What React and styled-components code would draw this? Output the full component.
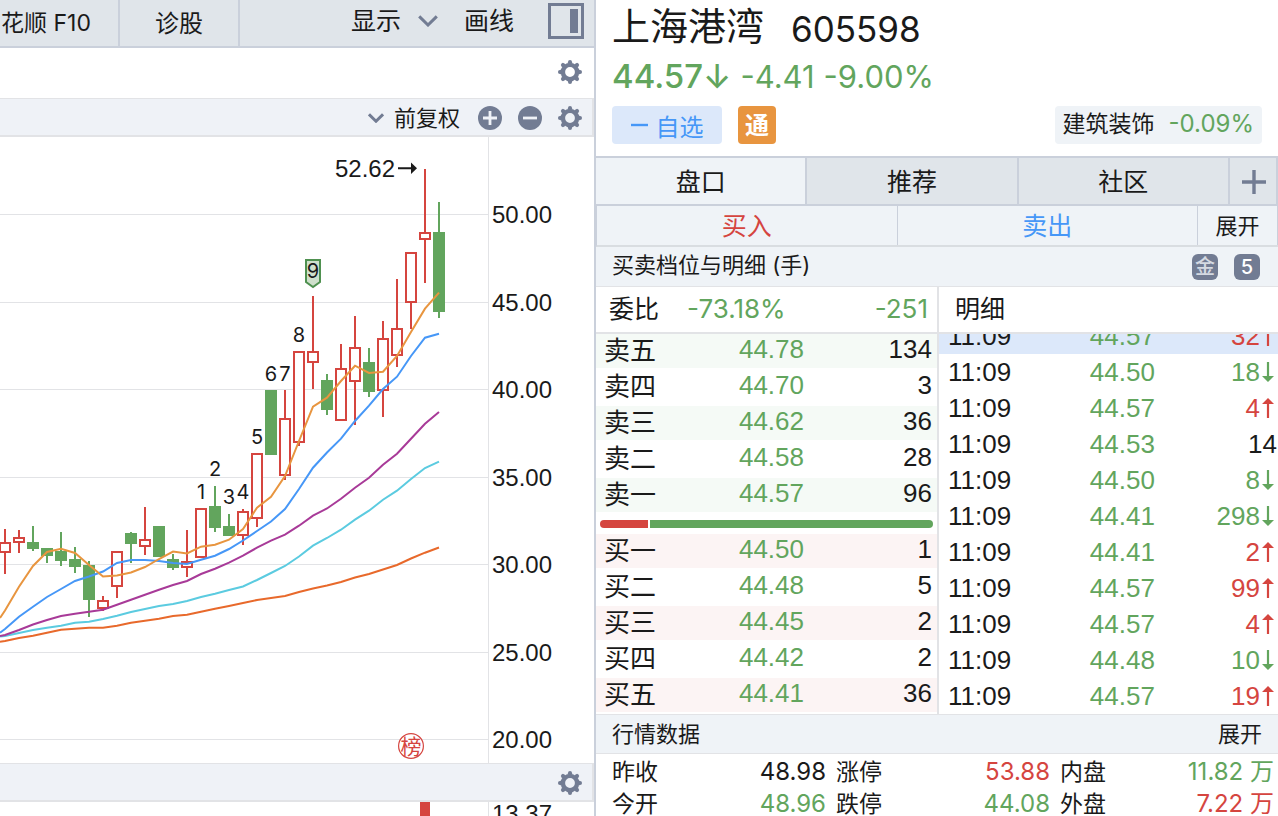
import React from "react";
import styled, { createGlobalStyle } from "styled-components";

const colours = {
  text: "#1a1a1a",
  up: "#d5453f",
  down: "#62a55d",
  blue: "#4697f7",
  orange: "#e8953f",
  slate: "#727c93",
  bar: "#e0e5ea",
  panel: "#eff3f7",
  strip: "#eff2f7",
  edge: "#cad0db",
  line: "#e2e3e6",
  white: "#ffffff"
};

const fonts = {
  ui: `Inter, "Noto Sans CJK SC", sans-serif`,
  data: `"Liberation Sans", "Noto Sans CJK SC", sans-serif`
};

const GlobalStyle = createGlobalStyle`
  * {
    box-sizing: border-box;
  }

  body {
    margin: 0;
    overflow: hidden;
    background-color: ${colours.white};
  }

  button {
    margin: 0;
    padding: 0;
    border: 0;
    background: none;
    color: inherit;
    font: inherit;
    cursor: pointer;
  }

  table {
    width: 100%;
    table-layout: fixed;
    border-spacing: 0;
  }

  th, td {
    padding: 0;
    font-weight: 400;
  }
`;

const Page = styled.div`
  /* Display & Box Model */
  display: grid;
  grid-template-columns: minmax(0, 596fr) minmax(0, 682fr);
  height: 100vh;
  overflow: hidden;

  /* Text */
  color: ${colours.text};
  font-family: ${fonts.ui};
  font-size: 24px;
`;

/* ---------- Chart side ---------- */

const ChartSide = styled.section`
  /* Display & Box Model */
  display: flex;
  flex-direction: column;
  min-width: 0;
  overflow: hidden;
  border-right: 2px solid ${colours.edge};
`;

const Toolbar = styled.nav`
  /* Display & Box Model */
  display: flex;
  flex: 0 0 48px;
  border-bottom: 2px solid ${colours.edge};

  /* Color */
  background-color: ${colours.bar};
`;

const ToolTab = styled.button`
  /* Display & Box Model */
  width: 120px;
  padding-left: ${props => (props.$cut ? "1px" : "0")};
  padding-bottom: 4px;
  border-right: 2px solid ${colours.edge};

  /* Text */
  font-size: ${props => (props.$cut ? "23px" : "24px")};
  text-align: ${props => (props.$cut ? "left" : "center")};
  white-space: nowrap;
`;

const ToolActions = styled.div`
  /* Display & Box Model */
  display: flex;
  flex: 1;
  align-items: center;
  justify-content: flex-end;
  gap: 26px;
  padding: 0 10px 4px 0;
`;

const ToolButton = styled.button`
  /* Display & Box Model */
  display: flex;
  align-items: center;
  gap: 17px;

  /* Text */
  font-size: 25px;
  line-height: 40px;
`;

const LayoutButton = styled.button`
  /* Display & Box Model */
  display: flex;
  margin-left: 8px;
`;

const InfoStrip = styled.div`
  /* Display & Box Model */
  display: flex;
  flex: 0 0 50px;
  align-items: center;
  justify-content: flex-end;
  padding: 0 12px 2px 0;
`;

const Strip = styled.div`
  /* Display & Box Model */
  display: flex;
  flex: 0 0 39px;
  align-items: center;
  justify-content: flex-end;
  gap: 16px;
  padding: 2px 10px 0 0;
  border: solid ${colours.line};
  border-width: 1px 2px 2px 0;

  /* Color */
  background-color: ${colours.strip};
`;

const AdjustButton = styled.button`
  /* Display & Box Model */
  display: flex;
  align-items: center;
  gap: 10px;
  margin-right: 2px;

  /* Text */
  font-size: 22px;
  line-height: 32px;
`;

const IconButton = styled.button`
  /* Display & Box Model */
  display: flex;
`;

const Drawing = styled.svg`
  /* Display & Box Model */
  display: block;
  flex: none;
  width: 100%;
  height: auto;

  /* Text */
  font-family: ${fonts.data};
  font-size: 24px;
`;

const Count = styled.text`
  /* Text */
  font-family: ${fonts.ui};
  font-size: 20px;
  text-anchor: middle;
`;

/* ---------- Quote side ---------- */

const QuoteSide = styled.section`
  /* Display & Box Model */
  display: flex;
  flex-direction: column;
  min-width: 0;
  overflow: hidden;
`;

const StockHeader = styled.header`
  /* Display & Box Model */
  padding: 0 16px 12px;
  border-bottom: 2px solid ${colours.edge};
`;

const StockTitle = styled.h1`
  /* Display & Box Model */
  display: flex;
  gap: 27px;
  height: 56px;
  margin: 0;

  /* Text */
  font-size: 38px;
  font-weight: 400;
  line-height: 53px;
`;

const StockCode = styled.span`
  /* Text */
  font-size: 35px;
  line-height: 59px;
`;

const PriceLine = styled.div`
  /* Display & Box Model */
  display: flex;
  align-items: baseline;
  gap: 9px;
  height: 40px;

  /* Color */
  color: ${colours.down};

  /* Text */
  font-size: 31px;
  line-height: 40px;
`;

const LastPrice = styled.span`
  /* Text */
  font-size: 33px;
  font-weight: 500;
`;

const TagRow = styled.div`
  /* Display & Box Model */
  display: flex;
  gap: 16px;
  margin-top: 10px;
`;

const Tag = styled.button`
  /* Display & Box Model */
  display: flex;
  align-items: center;
  justify-content: center;
  gap: 8px;
  min-width: ${props => props.$width};
  height: 38px;
  padding-bottom: ${props => (props.$bold ? "4px" : "0")};
  border-radius: 4px;

  /* Color */
  background-color: ${props => props.$fill};
  color: ${props => props.$ink};

  /* Text */
  font-weight: ${props => (props.$bold ? 700 : 400)};
`;

const Sector = styled.a`
  /* Display & Box Model */
  display: flex;
  gap: 14px;
  height: 38px;
  margin-left: auto;
  padding: 0 8px;
  border-radius: 4px;

  /* Color */
  background-color: ${colours.panel};
  color: ${colours.text};

  /* Text */
  font-size: 23px;
  line-height: 36px;
  text-decoration: none;
`;

const Tabs = styled.nav`
  /* Display & Box Model */
  display: grid;
  grid-template-columns: repeat(3, 1fr) 48px;
  flex: 0 0 48px;
  border-bottom: 2px solid ${colours.edge};
`;

const Tab = styled.button`
  /* Display & Box Model */
  display: flex;
  align-items: center;
  justify-content: center;
  padding: ${props => (props.$icon ? "2px 0 0 2px" : "0 0 2px")};
  border-right: 2px solid ${colours.edge};

  /* Color */
  background-color: ${props => (props.$active ? colours.panel : colours.bar)};

  /* Text */
  font-size: 25px;
`;

const TradeBar = styled.div`
  /* Display & Box Model */
  display: grid;
  grid-template-columns: 1fr 1fr 80px;
  flex: 0 0 41px;
  border-bottom: 2px solid #d9dde1;
  border-left: 1px solid ${colours.edge};

  /* Color */
  background-color: ${colours.panel};
`;

const TradeButton = styled.button`
  /* Display & Box Model */
  padding-top: 2px;
  border-right: 1px solid ${colours.edge};

  /* Color */
  color: ${props => props.$ink};

  /* Text */
  font-size: ${props => (props.$small ? "22px" : "25px")};
  line-height: 37px;
`;

const SectionBar = styled.div`
  /* Display & Box Model */
  display: flex;
  align-items: center;
  gap: 16px;
  flex: 0 0 40px;
  padding: 0 ${props => (props.$ruled ? "16px" : "18px")} 0 16px;
  border: solid ${colours.line};
  border-width: ${props => (props.$ruled ? "1px 0" : "0 0 1px")};

  /* Color */
  background-color: ${colours.panel};

  /* Text */
  font-size: 22px;
`;

const SectionTitle = styled.h2`
  /* Display & Box Model */
  flex: 1;
  margin: 0;
  padding-bottom: ${props => (props.$raised ? "4px" : "0")};

  /* Text */
  font-size: 22px;
  font-weight: 400;
  line-height: 34px;
`;

const ExpandButton = styled.button`
  /* Text */
  line-height: 34px;
`;

const Badge = styled.button`
  /* Display & Box Model */
  width: 26px;
  height: 26px;
  border-radius: 6px;

  /* Color */
  background-color: ${colours.slate};
  color: ${props => props.$ink};

  /* Text */
  font-size: 20px;
  font-weight: 500;
  line-height: 26px;
`;

const Depth = styled.div`
  /* Display & Box Model */
  display: grid;
  grid-template-columns: minmax(0, 341fr) minmax(0, 341fr);
  grid-template-rows: minmax(0, 1fr);
  flex: 0 0 427px;
  min-height: 0;

  /* Text */
  font-family: ${fonts.data};
  font-size: 26px;
`;

const DepthColumn = styled.div`
  /* Display & Box Model */
  display: flex;
  flex-direction: column;
  min-width: 0;
  min-height: 0;
  border-left: ${props => (props.$ruled ? `2px solid ${colours.line}` : "0")};
`;

const DepthHead = styled.div`
  /* Display & Box Model */
  display: flex;
  flex: 0 0 47px;
  gap: 28px;
  padding: 0 9px 0 ${props => (props.$wide ? "16px" : "13px")};
  border-bottom: 2px solid ${colours.line};

  /* Text */
  font-size: 25px;
  line-height: 45px;
`;

const Ratio = styled.span`
  /* Display & Box Model */
  margin-left: ${props => (props.$last ? "auto" : "0")};

  /* Color */
  color: ${colours.down};

  /* Text */
  font-family: ${fonts.ui};
  font-size: 26px;
  line-height: 43px;
`;

const LevelCell = styled.td`
  /* Display & Box Model */
  height: 36px;
  padding-right: ${props => (props.$last ? "5px" : "0")};
  border-bottom: 2px solid ${colours.white};

  /* Color */
  background-color: ${props => props.$fill};
  color: ${props => props.$ink};

  /* Text */
  line-height: 30px;
  text-align: right;
  vertical-align: top;
`;

const LevelName = styled(LevelCell).attrs({ as: "th", scope: "row" })`
  /* Display & Box Model */
  padding-left: 8px;

  /* Text */
  line-height: 34px;
  text-align: left;
`;

const Balance = styled.div`
  /* Display & Box Model */
  display: flex;
  flex: 0 0 8px;
  gap: 2px;
  margin: 6px 4px;
  border-radius: 4px;
  overflow: hidden;
`;

const Share = styled.div`
  /* Color */
  background-color: ${props => props.$fill};
`;

const TickList = styled.div`
  /* Display & Box Model */
  display: flex;
  flex: 1;
  flex-direction: column;
  justify-content: flex-end;
  min-height: 0;
  overflow: hidden;
`;

const TickRow = styled.tr`
  /* Color */
  background-color: ${props => (props.$active ? "#dce8fa" : colours.white)};
`;

const TickCell = styled.td`
  /* Display & Box Model */
  height: 36px;
  padding-left: ${props => (props.$first ? "9px" : "0")};
  padding-right: 1px;

  /* Color */
  color: ${props => props.$ink};

  /* Text */
  line-height: 36px;
  text-align: ${props => (props.$first ? "left" : "right")};
  white-space: nowrap;
`;

const Arrow = styled.svg`
  /* Display & Box Model */
  width: 12px;
  height: 20px;
  margin: 0 3px 0 2px;

  /* Color */
  fill: currentColor;

  /* Text */
  vertical-align: -1px;
`;

const Stats = styled.dl`
  /* Display & Box Model */
  display: grid;
  grid-template-columns: repeat(3, 1fr);
  gap: 0 10px;
  margin: 0;
  padding: 2px 4px 0 16px;
`;

const Stat = styled.div`
  /* Display & Box Model */
  display: flex;
  justify-content: space-between;

  /* Text */
  font-size: 23px;
  line-height: 32px;
`;

const StatValue = styled.dd`
  /* Display & Box Model */
  margin: 0;

  /* Color */
  color: ${props => props.$ink};

  /* Text */
  font-size: 24px;
`;

/* ---------- Data ---------- */

// x, rising, high, top, bottom, low
const candles = [
  [5, 1, 529, 542, 553, 574],
  [19, 1, 530, 537, 543, 553],
  [33, 0, 526, 542, 549, 551],
  [47, 0, 548, 548, 556, 563],
  [61, 0, 532, 551, 561, 566],
  [75, 0, 547, 559, 567, 573],
  [89, 0, 561, 565, 600, 617],
  [103, 1, 596, 600, 609, 611],
  [117, 1, 551, 551, 587, 598],
  [131, 0, 532, 533, 544, 563],
  [145, 1, 507, 539, 547, 555],
  [159, 0, 526, 526, 557, 557],
  [173, 0, 554, 559, 568, 570],
  [187, 1, 530, 561, 568, 577],
  [201, 1, 508, 508, 558, 558],
  [215, 0, 486, 506, 528, 532],
  [229, 0, 514, 526, 536, 536],
  [243, 1, 509, 511, 536, 545],
  [257, 1, 453, 453, 519, 527],
  [271, 0, 390, 390, 455, 455],
  [285, 1, 390, 418, 476, 480],
  [299, 1, 351, 351, 443, 446],
  [313, 1, 296, 351, 363, 389],
  [327, 0, 374, 380, 410, 415],
  [341, 1, 344, 368, 421, 421],
  [355, 1, 316, 347, 382, 425],
  [369, 0, 348, 362, 392, 397],
  [383, 1, 321, 338, 391, 417],
  [397, 1, 279, 328, 356, 367],
  [411, 1, 252, 252, 303, 329],
  [425, 1, 169, 232, 240, 283],
  [439, 0, 202, 232, 312, 318]
];

// one y per candle, starting on the candle at x = 5
const averages = [
  {
    colour: "#e8692b",
    start: 641.7,
    ys: [641, 638, 635.7, 632.7, 629.7, 628.7, 627.7, 627.7, 625.7, 622.7, 620.7, 618.7, 616, 614.7, 611.7, 608.7, 606, 603, 600, 598, 596, 592, 588.5, 585.5, 582, 577.5, 574, 569.5, 565, 558.5, 552.7, 547.5]
  },
  {
    colour: "#5bcbe0",
    start: 636.5,
    ys: [636, 633, 630, 627.7, 625.7, 622.7, 621.7, 619, 615.7, 612, 609, 606, 604, 601, 597, 593.7, 590, 586.5, 580, 573, 566, 556.5, 545.7, 538, 529.7, 519.7, 510.7, 499.7, 490.7, 479, 468, 461.7]
  },
  {
    colour: "#a83a98",
    start: 636,
    ys: [635, 630, 624.5, 620, 616, 613.7, 611.7, 609.7, 604.7, 599.7, 594.7, 589.7, 585, 581, 574, 568.7, 562.7, 555.7, 547.7, 540.7, 534.7, 525.7, 515.7, 508.5, 498.7, 487.7, 477.7, 464.7, 453.7, 438.7, 423.7, 412]
  },
  {
    colour: "#4697f7",
    start: 632.7,
    ys: [629, 616.7, 606.7, 597, 589, 581, 576.5, 571.5, 563, 560, 560, 561, 563, 564, 559.7, 555.7, 549, 540.5, 531, 521.5, 509, 489, 467.7, 452.5, 438.7, 421, 405.7, 389, 376.7, 356, 337.7, 333.7]
  },
  {
    colour: colours.orange,
    start: 618,
    ys: [610.5, 586.7, 566, 552, 548.7, 553, 565, 576.5, 575.5, 572.5, 567, 559, 551.5, 553.5, 546.7, 544.7, 539.7, 529, 507.7, 496.7, 476, 441, 406.7, 397.7, 381, 365.7, 373, 371.7, 356, 332, 308.7, 292.7]
  }
];

const counts = [
  ["1", 201, 499],
  ["2", 215, 476],
  ["3", 229, 504],
  ["4", 243, 499],
  ["5", 257, 444],
  ["6", 271, 381],
  ["7", 285, 381],
  ["8", 299, 342],
  ["9", 313, 278]
];

const gridLines = [
  ["50.00", 214.5],
  ["45.00", 302.5],
  ["40.00", 389.5],
  ["35.00", 477.5],
  ["30.00", 564.5],
  ["25.00", 652.5],
  ["20.00", 739.5]
];

const asks = [
  ["卖五", "44.78", "134"],
  ["卖四", "44.70", "3"],
  ["卖三", "44.62", "36"],
  ["卖二", "44.58", "28"],
  ["卖一", "44.57", "96"]
];

const bids = [
  ["买一", "44.50", "1"],
  ["买二", "44.48", "5"],
  ["买三", "44.45", "2"],
  ["买四", "44.42", "2"],
  ["买五", "44.41", "36"]
];

const ticks = [
  ["44.57", "32", "up"],
  ["44.50", "18", "down"],
  ["44.57", "4", "up"],
  ["44.53", "14", "text"],
  ["44.50", "8", "down"],
  ["44.41", "298", "down"],
  ["44.41", "2", "up"],
  ["44.57", "99", "up"],
  ["44.57", "4", "up"],
  ["44.48", "10", "down"],
  ["44.57", "19", "up"]
];

const stats = [
  ["昨收", "48.98", colours.text],
  ["涨停", "53.88", colours.up],
  ["内盘", "11.82 万", colours.down],
  ["今开", "48.96", colours.down],
  ["跌停", "44.08", colours.down],
  ["外盘", "7.22 万", colours.up]
];

/* ---------- Icons ---------- */

const GearIcon = () => (
  <svg width="24" height="24" viewBox="-12 -12 24 24" aria-hidden="true">
    <circle r="7.1" fill="none" stroke={colours.slate} strokeWidth="4.4" />
    {[0, 45, 90, 135, 180, 225, 270, 315].map(angle => (
      <path
        key={angle}
        d="M-2.5 -8.6 L-1.5 -11.5 Q0 -12.4 1.5 -11.5 L2.5 -8.6 Z"
        fill={colours.slate}
        transform={`rotate(${angle})`}
      />
    ))}
  </svg>
);

const RoundIcon = ({ plus }) => (
  <svg width="24" height="24" viewBox="0 0 24 24" aria-hidden="true">
    <circle cx="12" cy="12" r="12" fill={colours.slate} />
    <path
      d={plus ? "M5 12H19M12 5V19" : "M5 12H19"}
      stroke={colours.strip}
      strokeWidth="2.8"
    />
  </svg>
);

const ChevronIcon = ({ width }) => (
  <svg width={width} height={width / 2 + 2} viewBox="0 0 20 12" aria-hidden="true">
    <path
      d="M1.2 1.4L10 10L18.8 1.4"
      fill="none"
      stroke={colours.slate}
      strokeWidth={60 / width}
    />
  </svg>
);

const SideIcon = () => (
  <svg width="36" height="36" viewBox="0 0 36 36" aria-hidden="true">
    <rect x="1.5" y="1.5" width="33" height="33" fill="none" stroke={colours.slate} strokeWidth="3" />
    <rect x="22" y="6" width="8" height="24" fill={colours.slate} />
  </svg>
);

const CrossIcon = () => (
  <svg width="24" height="24" viewBox="0 0 24 24" aria-hidden="true">
    <path d="M0 12H24M12 0V24" stroke={colours.slate} strokeWidth="3.4" />
  </svg>
);

const MinusIcon = () => (
  <svg width="17" height="4" viewBox="0 0 17 4" aria-hidden="true">
    <path d="M0 2H17" stroke={colours.blue} strokeWidth="2.4" />
  </svg>
);

const TickArrow = ({ up }) => (
  <Arrow viewBox="0 0 12 20" role="img" aria-label={up ? "涨" : "跌"}>
    <path d={up ? "M6 0L12 6H7.1V20H4.9V6H0Z" : "M6 20L12 14H7.1V0H4.9V14H0Z"} />
  </Arrow>
);

/* ---------- Parts ---------- */

const Candle = ({ candle }) => {
  const [x, rising, high, top, bottom, low] = candle;
  const colour = rising ? colours.up : colours.down;

  return (
    <g stroke={colour} strokeWidth="2">
      <path d={`M${x} ${high}V${top}M${x} ${bottom}V${low}`} />
      <rect
        x={x - 5}
        y={top + 1}
        width="10"
        height={bottom - top - 2}
        fill={rising ? colours.white : colour}
      />
    </g>
  );
};

const PriceChart = () => (
  <Drawing viewBox="0 137 594 626" role="img" aria-label="日K线">
    {gridLines.map(([label, y]) => (
      <g key={label}>
        <path d={`M0 ${y}H488`} stroke={colours.line} />
        <text x="492" y={y + 8} fill={colours.text}>
          {label}
        </text>
      </g>
    ))}
    <path d="M488.5 137V763" stroke={colours.line} />
    {candles.map(candle => (
      <Candle key={candle[0]} candle={candle} />
    ))}
    {averages.map(({ colour, start, ys }) => (
      <polyline
        key={colour}
        points={`0,${start} ${ys.map((y, i) => `${5 + i * 14},${y}`).join(" ")}`}
        fill="none"
        stroke={colour}
        strokeWidth="2"
      />
    ))}
    <path
      d="M306 260H320V282L313 287L306 282Z"
      fill="#cfe0cc"
      stroke="#4f9150"
      strokeWidth="2"
    />
    {counts.map(([label, x, y]) => (
      <Count key={label} x={x} y={y} fill={colours.text}>
        {label}
      </Count>
    ))}
    <text x="335" y="177" fill={colours.text}>
      52.62
    </text>
    <path d="M398 167.2H411V162.5L417 168.2L411 174V169.2H398Z" fill={colours.text} />
    <circle cx="411" cy="746" r="12.4" fill={colours.white} stroke={colours.up} strokeWidth="1.2" />
    <text x="411" y="754" fill={colours.up} fontSize="21" textAnchor="middle">
      榜
    </text>
  </Drawing>
);

const VolumeChart = () => (
  <Drawing viewBox="0 802 594 40" role="img" aria-label="成交量">
    <path d="M488.5 802V842" stroke={colours.line} />
    <rect x="420" y="802" width="10" height="40" fill={colours.up} />
    <text x="492" y="822" fill={colours.text}>
      13.37
    </text>
  </Drawing>
);

const Levels = ({ rows, fill }) => (
  <table>
    <colgroup>
      <col width="26%" />
      <col width="35%" />
      <col width="39%" />
    </colgroup>
    <tbody>
      {rows.map(([name, price, volume], i) => {
        const rowFill = i % 2 ? colours.white : fill;
        return (
          <tr key={name}>
            <LevelName $fill={rowFill}>{name}</LevelName>
            <LevelCell $fill={rowFill} $ink={colours.down}>
              {price}
            </LevelCell>
            <LevelCell $fill={rowFill} $last>
              {volume}
            </LevelCell>
          </tr>
        );
      })}
    </tbody>
  </table>
);

const Ticks = () => (
  <TickList>
    <table>
      <colgroup>
        <col width="30%" />
        <col width="34%" />
        <col width="36%" />
      </colgroup>
      <tbody>
        {ticks.map(([price, volume, side], i) => (
          <TickRow key={i} $active={i === 0}>
            <TickCell $first>11:09</TickCell>
            <TickCell $ink={colours.down}>{price}</TickCell>
            <TickCell $ink={colours[side]}>
              {volume}
              {side !== "text" && <TickArrow up={side === "up"} />}
            </TickCell>
          </TickRow>
        ))}
      </tbody>
    </table>
  </TickList>
);

const App = () => (
  <Page>
    <GlobalStyle />
    <ChartSide>
      <Toolbar>
        <ToolTab $cut>花顺 F10</ToolTab>
        <ToolTab>诊股</ToolTab>
        <ToolActions>
          <ToolButton>
            显示
            <ChevronIcon width={20} />
          </ToolButton>
          <ToolButton>画线</ToolButton>
          <LayoutButton aria-label="侧栏">
            <SideIcon />
          </LayoutButton>
        </ToolActions>
      </Toolbar>
      <InfoStrip>
        <IconButton aria-label="设置">
          <GearIcon />
        </IconButton>
      </InfoStrip>
      <Strip>
        <AdjustButton>
          <ChevronIcon width={16} />
          前复权
        </AdjustButton>
        <IconButton aria-label="放大">
          <RoundIcon plus />
        </IconButton>
        <IconButton aria-label="缩小">
          <RoundIcon />
        </IconButton>
        <IconButton aria-label="设置">
          <GearIcon />
        </IconButton>
      </Strip>
      <PriceChart />
      <Strip>
        <IconButton aria-label="设置">
          <GearIcon />
        </IconButton>
      </Strip>
      <VolumeChart />
    </ChartSide>

    <QuoteSide>
      <StockHeader>
        <StockTitle>
          上海港湾
          <StockCode>605598</StockCode>
        </StockTitle>
        <PriceLine>
          <LastPrice>44.57↓</LastPrice>
          <span>-4.41</span>
          <span>-9.00%</span>
        </PriceLine>
        <TagRow>
          <Tag $width="110px" $fill="#dce8fa" $ink={colours.blue}>
            <MinusIcon />
            自选
          </Tag>
          <Tag $width="38px" $fill={colours.orange} $ink={colours.white} $bold>
            通
          </Tag>
          <Sector href="#sector">
            建筑装饰
            <StatValue as="span" $ink={colours.down}>
              -0.09%
            </StatValue>
          </Sector>
        </TagRow>
      </StockHeader>

      <Tabs>
        <Tab $active>盘口</Tab>
        <Tab>推荐</Tab>
        <Tab>社区</Tab>
        <Tab $icon aria-label="添加">
          <CrossIcon />
        </Tab>
      </Tabs>

      <TradeBar>
        <TradeButton $ink={colours.up}>买入</TradeButton>
        <TradeButton $ink={colours.blue}>卖出</TradeButton>
        <TradeButton $ink={colours.text} $small>
          展开
        </TradeButton>
      </TradeBar>

      <SectionBar>
        <SectionTitle $raised>买卖档位与明细 (手)</SectionTitle>
        <Badge $ink="#d5dae2">金</Badge>
        <Badge $ink={colours.white}>5</Badge>
      </SectionBar>

      <Depth>
        <DepthColumn>
          <DepthHead>
            委比
            <Ratio>-73.18%</Ratio>
            <Ratio $last>-251</Ratio>
          </DepthHead>
          <Levels rows={asks} fill="#f5faf6" />
          <Balance>
            <Share $fill={colours.up} style={{ flex: 48 }} />
            <Share $fill={colours.down} style={{ flex: 283 }} />
          </Balance>
          <Levels rows={bids} fill="#fcf4f4" />
        </DepthColumn>
        <DepthColumn $ruled>
          <DepthHead $wide>明细</DepthHead>
          <Ticks />
        </DepthColumn>
      </Depth>

      <SectionBar $ruled>
        <SectionTitle>行情数据</SectionTitle>
        <ExpandButton>展开</ExpandButton>
      </SectionBar>

      <Stats>
        {stats.map(([name, value, ink]) => (
          <Stat key={name}>
            <dt>{name}</dt>
            <StatValue $ink={ink}>{value}</StatValue>
          </Stat>
        ))}
      </Stats>
    </QuoteSide>
  </Page>
);

export default App;
